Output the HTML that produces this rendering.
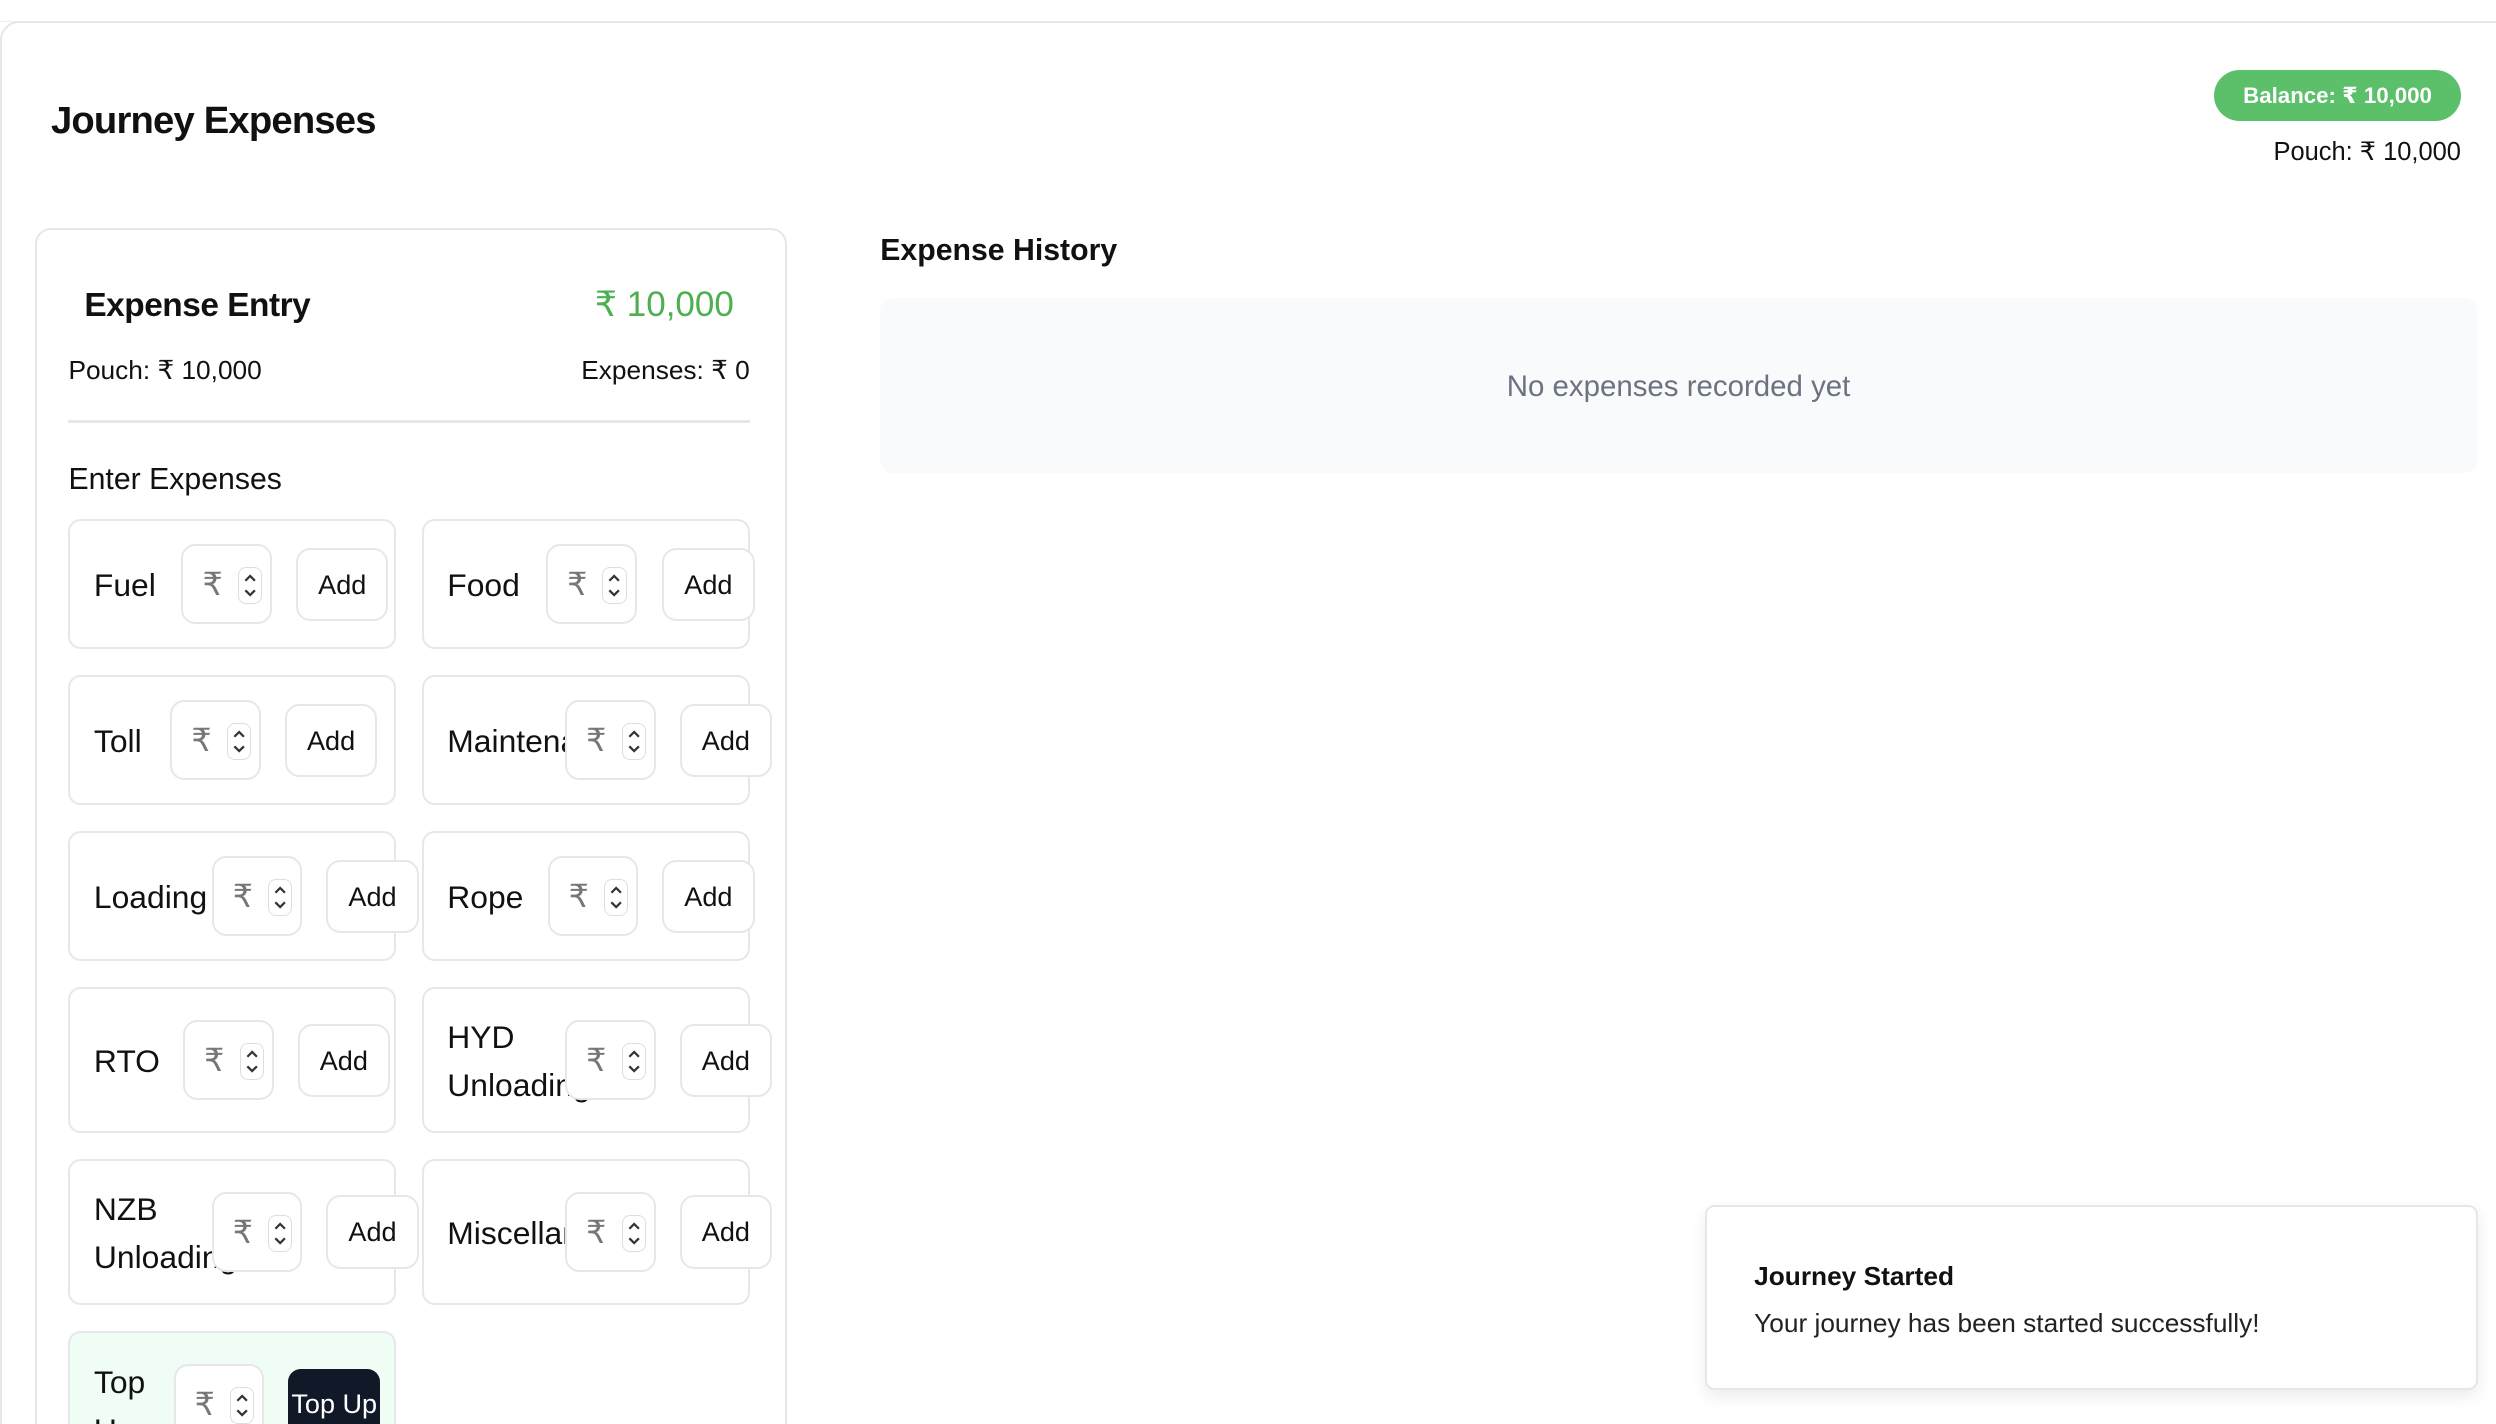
<!DOCTYPE html>
<html><head><meta charset="utf-8"><style>
html,body{margin:0;padding:0;background:#fff;overflow:hidden}
body{width:1568px;height:894px;zoom:1.5918;position:relative;font-family:"Liberation Sans","DejaVu Sans",sans-serif;color:#111;overflow:hidden}
.a{position:absolute}
.outer{left:0;top:13px;width:1600px;height:950px;border:1.5px solid #e5e7eb;border-radius:12px}
.topline{left:0;top:0;width:1568px;height:13px;border-bottom:1px solid #eee}
.panel{left:22px;top:143px;width:470px;height:800px;border:1.5px solid #e5e7eb;border-radius:10px}
.cell{border:1.5px solid #e5e7eb;border-radius:8px;width:206px;box-sizing:border-box}
.lbl{font-size:20px;line-height:30px}
.inp{width:57px;height:50px;border:1.5px solid #e5e7eb;border-radius:9px;box-sizing:border-box;background:#fff}
.inp .r{position:absolute;left:12px;top:12px;font-size:20px;color:#777}
.inp .sp{position:absolute;right:5px;top:13px;width:14px;height:22px;border:1px solid #ddd;border-radius:5px;background:#fff}
.inp .sp svg{display:block}
.btn{width:58px;height:46px;border:1.5px solid #e5e7eb;border-radius:9px;box-sizing:border-box;background:#fff;font-size:17px;text-align:center;line-height:45px}
</style></head><body>
<svg width="0" height="0" style="position:absolute"><defs><symbol id="s" viewBox="0 0 14 22"><path d="M4 8 L7 5 L10 8 M4 14 L7 17 L10 14" fill="none" stroke="#333" stroke-width="1.4"/></symbol></defs></svg>
<div class="a topline"></div>
<div class="a outer"></div>
<div class="a" style="left:32px;top:62px;font-size:24px;font-weight:bold;letter-spacing:-0.5px">Journey Expenses</div>
<div class="a" style="left:1391px;top:44px;width:155px;height:32px;border-radius:16px;background:#5cbf6a;color:#fff;font-size:14px;font-weight:bold;text-align:center;line-height:33px">Balance: ₹ 10,000</div>
<div class="a" style="right:22px;top:86px;font-size:16px">Pouch: ₹ 10,000</div>

<div class="a panel"></div>
<div class="a" style="left:53px;top:180px;font-size:21px;font-weight:bold;letter-spacing:-0.3px">Expense Entry</div>
<div class="a" style="right:1107px;top:179px;font-size:22px;color:#4caf50">₹ 10,000</div>
<div class="a" style="left:43px;top:223px;font-size:16.5px">Pouch: ₹ 10,000</div>
<div class="a" style="right:1097px;top:223px;font-size:16.5px">Expenses: ₹ 0</div>
<div class="a" style="left:43px;top:264px;width:428px;height:1.5px;background:#e5e7eb"></div>
<div class="a" style="left:43px;top:291px;font-size:19px">Enter Expenses</div>

<div class="a cell" style="left:43px;top:326px;height:82px"></div>
<div class="a lbl" style="left:59px;top:353px">Fuel</div>
<div class="a inp" style="left:114px;top:342px"><span class="r">₹</span><span class="sp"><svg width="14" height="22"><use href="#s"/></svg></span></div>
<div class="a btn" style="left:186px;top:344px">Add</div>
<div class="a cell" style="left:265px;top:326px;height:82px"></div>
<div class="a lbl" style="left:281px;top:353px">Food</div>
<div class="a inp" style="left:343px;top:342px"><span class="r">₹</span><span class="sp"><svg width="14" height="22"><use href="#s"/></svg></span></div>
<div class="a btn" style="left:416px;top:344px">Add</div>

<div class="a cell" style="left:43px;top:424px;height:82px"></div>
<div class="a lbl" style="left:59px;top:451px">Toll</div>
<div class="a inp" style="left:107px;top:440px"><span class="r">₹</span><span class="sp"><svg width="14" height="22"><use href="#s"/></svg></span></div>
<div class="a btn" style="left:179px;top:442px">Add</div>
<div class="a cell" style="left:265px;top:424px;height:82px"></div>
<div class="a lbl" style="left:281px;top:451px;width:74px;overflow:hidden;white-space:nowrap">Maintenance</div>
<div class="a inp" style="left:355px;top:440px"><span class="r">₹</span><span class="sp"><svg width="14" height="22"><use href="#s"/></svg></span></div>
<div class="a btn" style="left:427px;top:442px">Add</div>

<div class="a cell" style="left:43px;top:522px;height:82px"></div>
<div class="a lbl" style="left:59px;top:549px">Loading</div>
<div class="a inp" style="left:133px;top:538px"><span class="r">₹</span><span class="sp"><svg width="14" height="22"><use href="#s"/></svg></span></div>
<div class="a btn" style="left:205px;top:540px">Add</div>
<div class="a cell" style="left:265px;top:522px;height:82px"></div>
<div class="a lbl" style="left:281px;top:549px">Rope</div>
<div class="a inp" style="left:344px;top:538px"><span class="r">₹</span><span class="sp"><svg width="14" height="22"><use href="#s"/></svg></span></div>
<div class="a btn" style="left:416px;top:540px">Add</div>

<div class="a cell" style="left:43px;top:620px;height:92px"></div>
<div class="a lbl" style="left:59px;top:652px">RTO</div>
<div class="a inp" style="left:115px;top:641px"><span class="r">₹</span><span class="sp"><svg width="14" height="22"><use href="#s"/></svg></span></div>
<div class="a btn" style="left:187px;top:643px">Add</div>
<div class="a cell" style="left:265px;top:620px;height:92px"></div>
<div class="a lbl" style="left:281px;top:637px">HYD<br>Unloading</div>
<div class="a inp" style="left:355px;top:641px"><span class="r">₹</span><span class="sp"><svg width="14" height="22"><use href="#s"/></svg></span></div>
<div class="a btn" style="left:427px;top:643px">Add</div>

<div class="a cell" style="left:43px;top:728px;height:92px"></div>
<div class="a lbl" style="left:59px;top:745px">NZB<br>Unloading</div>
<div class="a inp" style="left:133px;top:749px"><span class="r">₹</span><span class="sp"><svg width="14" height="22"><use href="#s"/></svg></span></div>
<div class="a btn" style="left:205px;top:751px">Add</div>
<div class="a cell" style="left:265px;top:728px;height:92px"></div>
<div class="a lbl" style="left:281px;top:760px;width:74px;overflow:hidden;white-space:nowrap">Miscellaneous</div>
<div class="a inp" style="left:355px;top:749px"><span class="r">₹</span><span class="sp"><svg width="14" height="22"><use href="#s"/></svg></span></div>
<div class="a btn" style="left:427px;top:751px">Add</div>

<div class="a cell" style="left:43px;top:836px;height:100px;background:#f0fdf4"></div>
<div class="a lbl" style="left:59px;top:854px">Top<br>Up</div>
<div class="a inp" style="left:109px;top:857px"><span class="r">₹</span><span class="sp"><svg width="14" height="22"><use href="#s"/></svg></span></div>
<div class="a" style="left:181px;top:860px;width:58px;height:50px;background:#111827;border-radius:8px;color:#fff;font-size:17px;line-height:44px;text-align:center;white-space:nowrap;overflow:hidden">Top Up</div>

<div class="a" style="left:553px;top:147px;font-size:19px;font-weight:bold">Expense History</div>
<div class="a" style="left:553px;top:187px;width:1003px;height:110px;background:#f9fafb;border-radius:8px;text-align:center;line-height:112px;font-size:18.5px;color:#6b7280">No expenses recorded yet</div>

<div class="a" style="left:1071px;top:757px;width:486px;height:116px;box-sizing:border-box;border:1.5px solid #e5e7eb;border-radius:6px;background:#fff;box-shadow:0 4px 10px rgba(0,0,0,0.08)"></div>
<div class="a" style="left:1102px;top:792px;font-size:16.5px;font-weight:bold">Journey Started</div>
<div class="a" style="left:1102px;top:822px;font-size:16.5px;color:#222">Your journey has been started successfully!</div>
</body></html>
